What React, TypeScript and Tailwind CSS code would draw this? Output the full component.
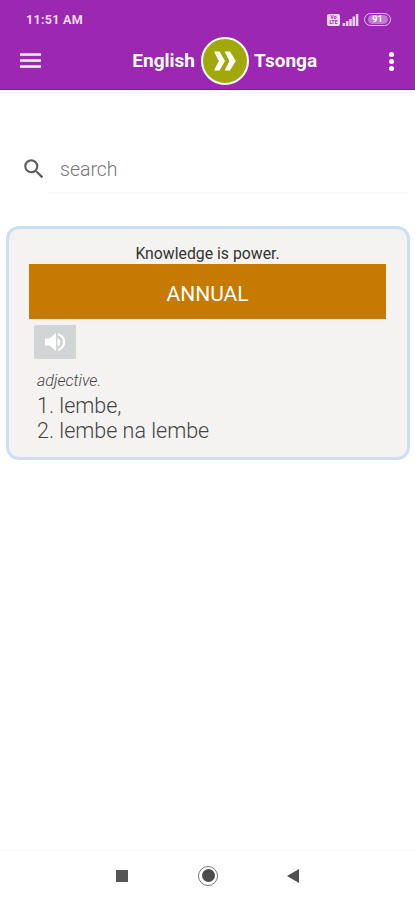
// ─── icons ───────────────────────────────────────────────────────────────────

function MenuIcon() {
  return (
    <svg width="21" height="16" viewBox="0 0 21 16" fill="#fbf1fc">
      <rect y="0.3" width="21" height="2.5" />
      <rect y="6.3" width="21" height="2.5" />
      <rect y="12.3" width="21" height="2.5" />
    </svg>
  );
}

function SignalIcon() {
  return (
    <svg width="17" height="12" viewBox="0 0 17 12" fill="#e9cbef">
      <rect x="0.5" y="9" width="2.6" height="3" />
      <rect x="3.9" y="7" width="2.6" height="5" />
      <rect x="7.2" y="5" width="2.6" height="7" />
      <rect x="10.5" y="2.5" width="2.6" height="9.5" />
      <rect x="13.8" y="0" width="2.6" height="12" />
    </svg>
  );
}

function ForwardIcon() {
  return (
    <svg width="22" height="20" viewBox="0 0 22 20" fill="#fff">
      <path d="M0 .5h5.5L11 10l-5.5 9.500H0L4.800 10z" />
      <path d="M10.500 .5H16l5.800 9.500-5.800 9.500h-5.500l5-9.500z" />
    </svg>
  );
}

function SearchIcon() {
  return (
    <svg width="26" height="26" viewBox="0 0 24 24" fill="#5f5f5f">
      <path d="M15.5 14h-.79l-.28-.27A6.47 6.47 0 0 0 16 9.5 6.5 6.5 0 1 0 9.5 16c1.61 0 3.09-.59 4.23-1.57l.27.28v.79l5 4.99L20.49 19l-4.99-5zm-6 0C7.01 14 5 11.99 5 9.5S7.01 5 9.5 5 14 7.01 14 9.5 11.99 14 9.5 14z" />
    </svg>
  );
}

function SpeakerIcon() {
  return (
    <svg width="20" height="20" viewBox="0 0 20 20" fill="#fff">
      <path d="M0 6.5v7h4.5L11 19V1L4.5 6.5z" />
      <path d="M13 1v2.3a7 7 0 0 1 0 13.4V19a9.2 9.2 0 0 0 0-18z" />
      <path d="M12.5 5.8v8.4a4.6 4.6 0 0 0 0-8.4z" />
    </svg>
  );
}

// ─── sections ────────────────────────────────────────────────────────────────

function StatusBar() {
  return (
    <div className="flex h-[38px] items-start justify-between pt-[13px] pr-[24px] pl-[26px]">
      <span className="text-[12.5px] leading-[14px] font-bold tracking-[0.3px] text-[#f0d9f4]">11:51 AM</span>
      <div className="flex items-center">
        <span className="mr-[2px] flex h-[12px] w-[13px] flex-col items-center justify-center rounded-[2px] bg-[#f0d9f4] text-[5px] leading-[5px] font-bold text-[#9c27b0]">
          <span>Vo</span>
          <span>LTE</span>
        </span>
        <SignalIcon />
        <span className="ml-[5px] flex h-[13px] w-[27px] items-center justify-center rounded-full border-[1.5px] border-[#e6c3ec]">
          <span className="flex h-[9px] w-[20px] items-center justify-center rounded-full bg-[#c27bd0] text-[9px] leading-[9px] font-bold text-white">
            91
          </span>
        </span>
      </div>
    </div>
  );
}

function AppBar() {
  return (
    <div className="flex h-[52px] items-start pr-[20px] pl-[20px]">
      <button aria-label="Menu" className="mt-[15px] w-[21px]">
        <MenuIcon />
      </button>
      <div className="ml-[89px] flex items-center text-[19px] font-bold text-white">
        <span className="w-[65px] text-right">English</span>
        <button
          aria-label="Swap languages"
          className="mr-[5px] ml-[6px] -mt-[1px] flex size-[48px] items-center justify-center rounded-full border-2 border-white bg-[#a0a80a]"
        >
          <ForwardIcon />
        </button>
        <span className="w-[68px]">Tsonga</span>
      </div>
      <button aria-label="More" className="mt-[14px] ml-auto flex w-[7px] flex-col items-center gap-[2px]">
        <span className="size-[5px] rounded-full bg-white" />
        <span className="size-[5px] rounded-full bg-white" />
        <span className="size-[5px] rounded-full bg-white" />
      </button>
    </div>
  );
}

function SearchField() {
  return (
    <div className="mt-[62px] flex h-[42px] pl-[21px]">
      <div className="mt-[4px] w-[27px]">
        <SearchIcon />
      </div>
      <div className="mr-[7px] flex-1 border-b-2 border-[#f7f7f7] pl-[12px]">
        <span className="block pt-[6px] text-[19.5px] leading-[24px] font-light text-[#777]">search</span>
      </div>
    </div>
  );
}

function WordCard() {
  return (
    <div className="mt-[32px] mr-[5px] ml-[6px] h-[234px] rounded-[13px] border-[3px] border-[#cbdff5] bg-[#f4f3f1] pt-[15px] pr-[21px] pl-[20px]">
      <p className="text-center text-[15.8px] leading-[20px] text-[#333]">Knowledge is power.</p>
      <div className="flex h-[55px] items-center justify-center bg-[#c67903] pt-[6px] text-[21px] text-white">
        ANNUAL
      </div>
      <button
        aria-label="Listen"
        className="mt-[6px] ml-[5px] flex h-[34px] w-[42px] items-center justify-center rounded-[1px] bg-[#d2d5d5]"
      >
        <SpeakerIcon />
      </button>
      <p className="mt-[12px] pl-[8px] text-[16px] leading-[20px] font-light text-[#444] italic">adjective.</p>
      <ol className="mt-[2px] pl-[8px] text-[21.5px] leading-[25px] font-light text-[#444]">
        <li>1. lembe,</li>
        <li>2. lembe na lembe</li>
      </ol>
    </div>
  );
}

function NavigationBar() {
  return (
    <div className="mt-auto flex h-[50px] items-center border-t border-[#f9f9f9] pl-[116px]">
      <span className="size-[12px] bg-[#555]" />
      <span className="ml-[70px] flex size-[20px] items-center justify-center rounded-full border-[1.5px] border-[#777]">
        <span className="size-[13px] rounded-full bg-[#4d4d4d]" />
      </span>
      <svg className="ml-[69px]" width="12" height="14" viewBox="0 0 12 14" fill="#505050">
        <path d="M12 0v14L0 7z" />
      </svg>
    </div>
  );
}

export default function App() {
  return (
    <div className="flex h-[900px] w-full flex-col overflow-hidden bg-white font-['Roboto',sans-serif]">
      <header className="h-[90px] border-b border-[#8b189f] bg-[#9c27b0]">
        <StatusBar />
        <AppBar />
      </header>
      <SearchField />
      <WordCard />
      <NavigationBar />
    </div>
  );
}
